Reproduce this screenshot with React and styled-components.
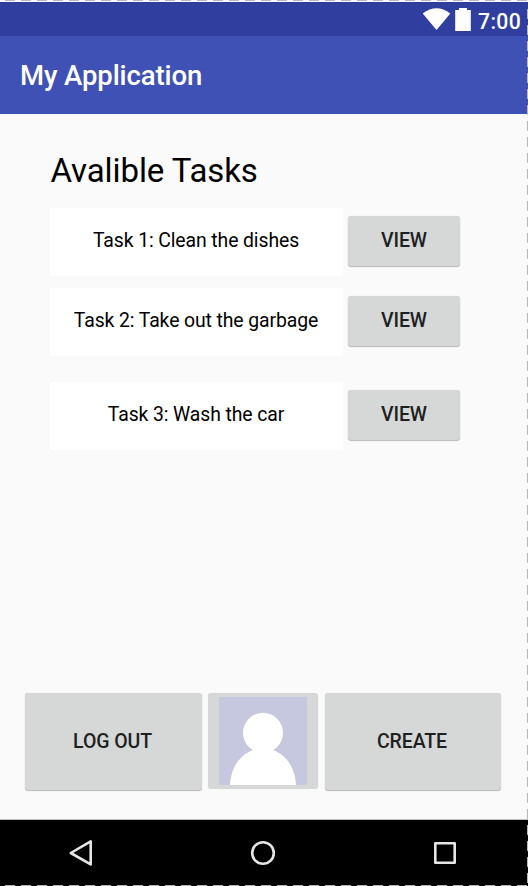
import React from 'react';
import styled, { createGlobalStyle } from 'styled-components';

const Global = createGlobalStyle`
  *, *::before, *::after { box-sizing: border-box; }
  body { margin: 0; font-family: Roboto, sans-serif; background: #fafafa; }
`;

const Screen = styled.div`
  position: relative;
  display: flex;
  flex-direction: column;
  width: 528px;
  height: 886px;
  padding-top: 2px;
  overflow: hidden;
  background: #fafafa;
  color: #000;
`;

const Selection = styled.svg`
  position: absolute;
  inset: 0;
  pointer-events: none;
`;

const StatusBar = styled.header`
  flex: none;
  display: flex;
  justify-content: flex-end;
  height: 34px;
  background: #303f9f;
`;

const StatusIcons = styled.svg`
  flex: none;
  width: 60px;
  height: 34px;
`;

const Clock = styled.span`
  width: 50px;
  font-size: 21.2px;
  font-weight: 500;
  line-height: 39px;
  letter-spacing: 0.35px;
  color: #fff;
`;

const AppBar = styled.div`
  flex: none;
  height: 78px;
  padding-left: 20px;
  background: #3f51b5;
  color: #fff;
  font-size: 27.5px;
  font-weight: 500;
  letter-spacing: -0.1px;
  line-height: 79px;
`;

const Content = styled.main`
  flex: 1;
  display: flex;
  flex-direction: column;
  padding: 37px 27px 29px 25px;
  border-bottom: 1px solid #bcbebd;
`;

const Heading = styled.h1`
  margin: 0 0 18px 25px;
  padding-left: 0.5px;
  font-size: 33px;
  font-weight: 400;
  letter-spacing: -0.1px;
  line-height: 39px;
`;

const TaskList = styled.div`
  display: flex;
  flex-direction: column;
  margin-left: 25px;
`;

const TaskRow = styled.div`
  display: flex;
  gap: 5px;
  height: 68px;
  margin-bottom: ${(p) => p.$after}px;
`;

const TaskLabel = styled.div`
  width: 293px;
  padding-right: 1px;
  background: #fff;
  font-size: 19.4px;
  letter-spacing: -0.1px;
  line-height: 65px;
  text-align: center;
`;

const Button = styled.button`
  display: flex;
  align-items: center;
  justify-content: center;
  width: ${(p) => p.$w}px;
  height: ${(p) => p.$h}px;
  margin: ${(p) => p.$top || 0}px 0 0;
  padding: 0 0 1px;
  border: 0;
  border-radius: 3px;
  background: #d6d8d7;
  box-shadow: 0 1px 1px rgba(0, 0, 0, 0.26), 0 0 1px rgba(0, 0, 0, 0.14);
  color: #1e1f1f;
  font-family: inherit;
  font-size: 19.5px;
  font-weight: 500;
  letter-spacing: -0.1px;
`;

const WideButton = styled(Button)`
  padding: 0 2px 1px 0;
`;

const AvatarButton = styled(Button)`
  padding: 0;
  margin-right: 1px;
  box-shadow: 0 0 1px rgba(0, 0, 0, 0.1);
`;

const Actions = styled.div`
  display: flex;
  gap: 6px;
  margin-top: auto;
`;

const NavBar = styled.nav`
  flex: none;
  display: flex;
  height: 66px;
  background: #000;
`;

const tasks = [
  { label: 'Task 1: Clean the dishes', after: 12 },
  { label: 'Task 2: Take out the garbage', after: 26 },
  { label: 'Task 3: Wash the car', after: 0 },
];

export default function App() {
  return (
    <>
      <Global />
      <Screen>
        <StatusBar>
          <StatusIcons viewBox="418 2 60 34" fill="#fff" aria-hidden="true">
            <path d="M422.7 13.4Q436.5 3 450.3 13.4L436.5 30Z" />
            <path d="M455.2 10H459V8H467V10H470.8V31H455.2Z" />
          </StatusIcons>
          <Clock>7:00</Clock>
        </StatusBar>
        <AppBar>My Application</AppBar>
        <Content>
          <Heading>Avalible Tasks</Heading>
          <TaskList>
            {tasks.map((t) => (
              <TaskRow key={t.label} $after={t.after}>
                <TaskLabel>{t.label}</TaskLabel>
                <Button $w={112} $h={50} $top={8}>VIEW</Button>
              </TaskRow>
            ))}
          </TaskList>
          <Actions>
            <WideButton $w={177} $h={97}>LOG OUT</WideButton>
            <AvatarButton $w={110} $h={96} aria-label="Profile">
              <svg width="88" height="88" viewBox="0 0 88 88">
                <path fill="#c5c8de" d="M0 0H88V88H0Z" />
                <circle cx="44" cy="35.8" r="20" fill="#fff" />
                <path fill="#fff" d="M11 88C12 70 21 58 34 53Q37 51 34 49H54Q51 51 54 53C67 58 76 70 77 88Z" />
              </svg>
            </AvatarButton>
            <WideButton $w={176} $h={97}>CREATE</WideButton>
          </Actions>
        </Content>
        <NavBar>
          <svg width="528" height="66" viewBox="0 820 528 66" fill="none" stroke="#e6e6e6" strokeWidth="2.6" strokeLinejoin="round">
            <path d="M70.8 853L90.7 841.3V864.4Z" />
            <circle cx="263" cy="853" r="10.8" />
            <path d="M435.3 843.3H454.7V862.7H435.3Z" />
          </svg>
        </NavBar>
        <Selection width="528" height="886" fill="none" stroke="#b9b7b9" strokeDasharray="10 6">
          <path d="M5 .5H528" />
          <path d="M527.5 9V886" />
          <path d="M5 885.5H528" />
        </Selection>
      </Screen>
    </>
  );
}
